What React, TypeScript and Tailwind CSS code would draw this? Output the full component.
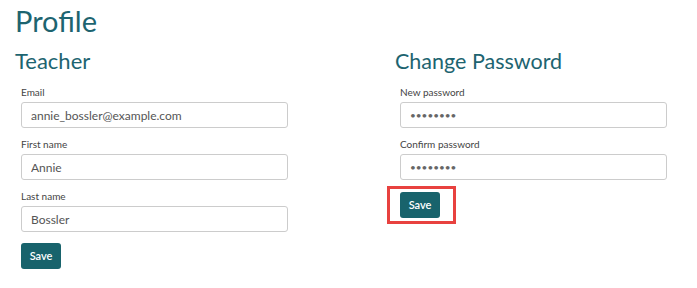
import React from "react";

const font = { fontFamily: "Lato, 'Open Sans', sans-serif" };

function Field({ label, value, type = "text" }: { label: string; value: string; type?: string }) {
  const isPassword = type === "password";
  return (
    <div className="mb-[10px]">
      <label className="block text-[10px] leading-[13px] text-[#444] mb-[3px]">{label}</label>
      <input
        type={type}
        defaultValue={value}
        readOnly
        className={`block w-[267px] h-[26px] px-[9px] bg-white border border-[#ccc] rounded-[3px] outline-none ${
          isPassword ? "text-[10px] text-[#666]" : "text-[12px] text-[#555]"
        }`}
      />
    </div>
  );
}

function SaveButton() {
  return (
    <button className="h-[26px] w-[40px] rounded-[3px] bg-[#18636c] text-white text-[11px] font-semibold">
      Save
    </button>
  );
}

export default function App() {
  return (
    <div className="w-[697px] h-[288px] bg-white overflow-hidden" style={font}>
      <h1 className="pl-[15px] pt-[4px] text-[29px] leading-[34px] text-[#1d6470]">Profile</h1>
      <div className="grid grid-cols-[395px_1fr] mt-[10px]">
        {/* Teacher */}
        <div className="pl-[15px]">
          <h2 className="text-[22px] leading-[26px] text-[#1d6470] mb-[12px]">Teacher</h2>
          <div className="pl-[6px]">
            <Field label="Email" value="annie_bossler@example.com" />
            <Field label="First name" value="Annie" />
            <Field label="Last name" value="Bossler" />
            <SaveButton />
          </div>
        </div>

        {/* Change password */}
        <div>
          <h2 className="text-[21.5px] leading-[26px] text-[#1d6470] mb-[12px]">Change Password</h2>
          <div className="pl-[5px]">
            <Field label="New password" value="password" type="password" />
            <Field label="Confirm password" value="password" type="password" />
            <div className="-ml-[13px] -mt-[4px] w-[69px] h-[38px] border-[3px] border-[#e8413f] flex items-center pl-[10px]">
              <SaveButton />
            </div>
          </div>
        </div>
      </div>
    </div>
  );
}
